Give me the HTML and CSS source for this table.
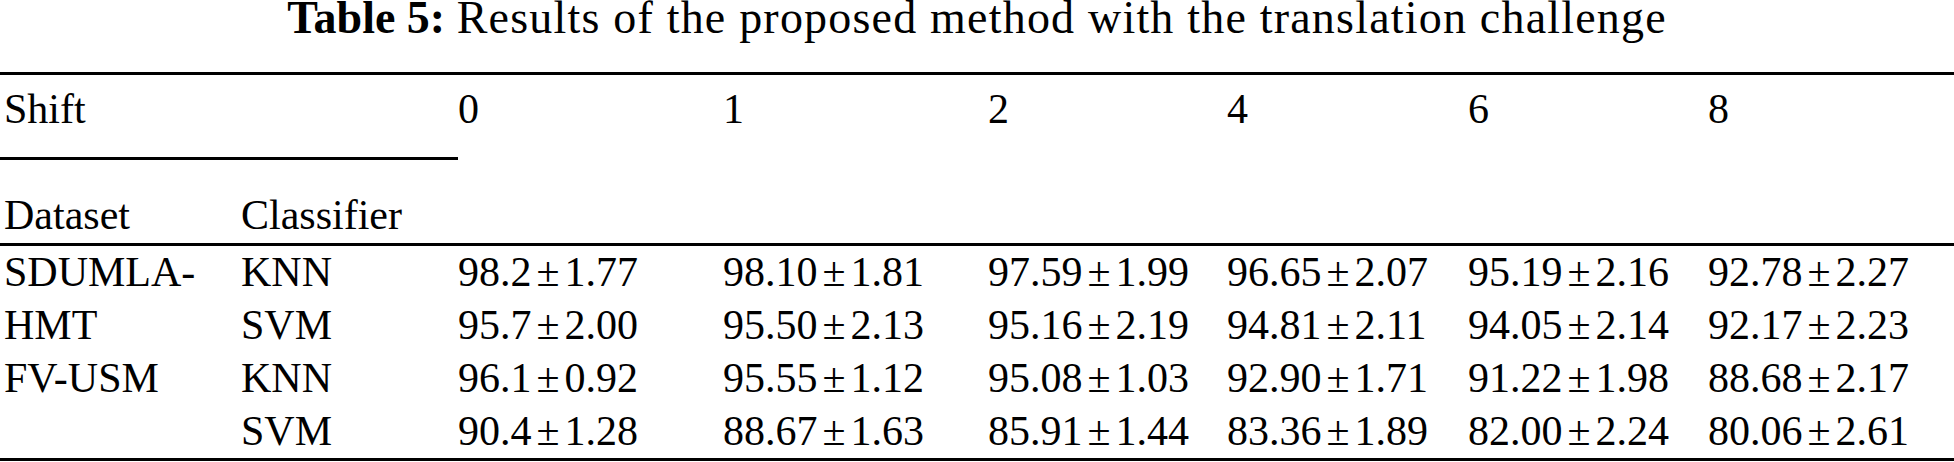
FILE: index.html
```html
<!DOCTYPE html>
<html>
<head>
<meta charset="utf-8">
<link rel="stylesheet" href="styles.css">
</head>
<body>
<div class="caption"><b>Table 5:</b> <span class="cap-text">Results of the proposed method with the translation challenge</span></div>
<table class="results">
  <colgroup>
    <col class="c-ds"><col class="c-cl"><col class="c-a"><col class="c-b"><col class="c-c"><col class="c-d"><col class="c-e"><col class="c-f">
  </colgroup>
  <thead>
    <tr class="head1">
      <th colspan="2" class="shift">Shift</th>
      <th>0</th><th>1</th><th>2</th><th>4</th><th>6</th><th>8</th>
    </tr>
    <tr class="head2">
      <th class="first">Dataset</th>
      <th>Classifier</th>
      <th colspan="6"></th>
    </tr>
  </thead>
  <tbody>
    <tr>
      <td rowspan="2" class="first ds">SDUMLA-HMT</td>
      <td>KNN</td>
      <td>98.2<span class="pm">±</span>1.77</td>
      <td>98.10<span class="pm">±</span>1.81</td>
      <td>97.59<span class="pm">±</span>1.99</td>
      <td>96.65<span class="pm">±</span>2.07</td>
      <td>95.19<span class="pm">±</span>2.16</td>
      <td>92.78<span class="pm">±</span>2.27</td>
    </tr>
    <tr>
      <td>SVM</td>
      <td>95.7<span class="pm">±</span>2.00</td>
      <td>95.50<span class="pm">±</span>2.13</td>
      <td>95.16<span class="pm">±</span>2.19</td>
      <td>94.81<span class="pm">±</span>2.11</td>
      <td>94.05<span class="pm">±</span>2.14</td>
      <td>92.17<span class="pm">±</span>2.23</td>
    </tr>
    <tr>
      <td rowspan="2" class="first ds">FV-USM</td>
      <td>KNN</td>
      <td>96.1<span class="pm">±</span>0.92</td>
      <td>95.55<span class="pm">±</span>1.12</td>
      <td>95.08<span class="pm">±</span>1.03</td>
      <td>92.90<span class="pm">±</span>1.71</td>
      <td>91.22<span class="pm">±</span>1.98</td>
      <td>88.68<span class="pm">±</span>2.17</td>
    </tr>
    <tr>
      <td>SVM</td>
      <td>90.4<span class="pm">±</span>1.28</td>
      <td>88.67<span class="pm">±</span>1.63</td>
      <td>85.91<span class="pm">±</span>1.44</td>
      <td>83.36<span class="pm">±</span>1.89</td>
      <td>82.00<span class="pm">±</span>2.24</td>
      <td>80.06<span class="pm">±</span>2.61</td>
    </tr>
  </tbody>
</table>
</body>
</html>
```

FILE: styles.css
```css
html, body {
  margin: 0;
  padding: 0;
  background: #fff;
}
body {
  font-family: "Liberation Serif", "Times New Roman", serif;
  color: #000;
  width: 1954px;
  height: 462px;
  overflow: hidden;
}
.caption {
  font-size: 46px;
  line-height: 36px;
  height: 36px;
  margin-bottom: 36px;
  text-align: center;
  white-space: nowrap;
}
.caption b {
  font-weight: bold;
}
.cap-text {
  letter-spacing: 1.2px;
}
.results {
  width: 1954px;
  table-layout: fixed;
  border-collapse: collapse;
  border-top: 3px solid #000;
  border-bottom: 3px solid #000;
  font-size: 42px;
}
.c-ds { width: 241px; }
.c-cl { width: 217px; }
.c-a { width: 265px; }
.c-b { width: 265px; }
.c-c { width: 239px; }
.c-d { width: 241px; }
.c-e { width: 240px; }
.c-f { width: 246px; }
.results th,
.results td {
  padding: 0;
  text-align: left;
  font-weight: normal;
  vertical-align: top;
  white-space: nowrap;
}
.results .first,
.results .shift {
  padding-left: 4px;
}
.head1 th {
  line-height: 45px;
  padding-top: 12px;
  padding-bottom: 25px;
}
.head1 .shift {
  border-bottom: 3px solid #000;
}
.head2 th {
  line-height: 45px;
  padding-top: 33px;
  padding-bottom: 5px;
  border-bottom: 3px solid #000;
}
.results td {
  line-height: 53px;
}
.results td.ds {
  white-space: normal;
}
.pm {
  margin: 0 5px;
}
```
